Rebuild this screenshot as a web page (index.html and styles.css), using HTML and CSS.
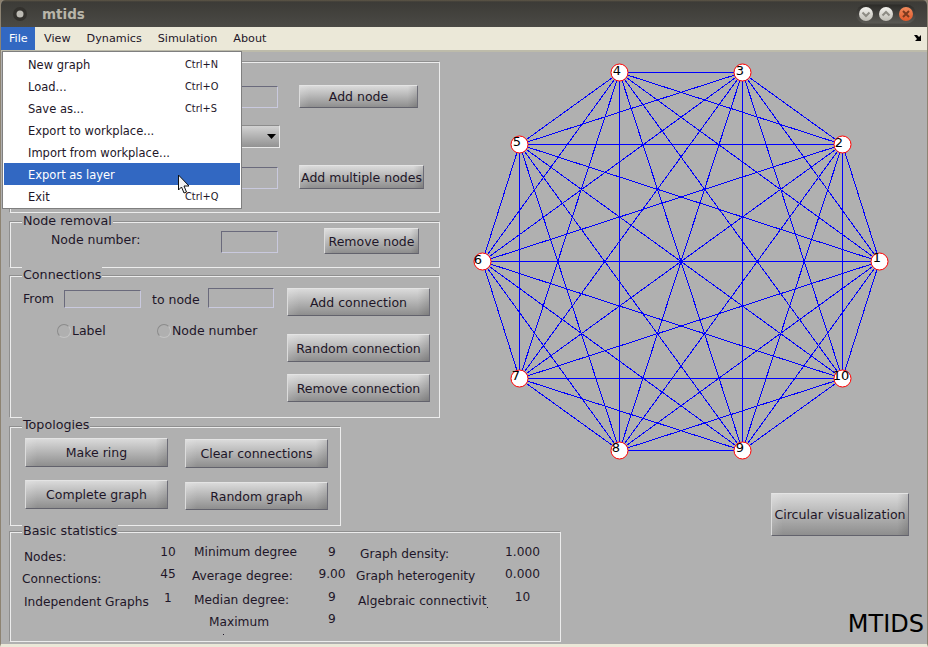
FILE: index.html
```html
<!DOCTYPE html>
<html lang="en">
<head>
<meta charset="utf-8">
<title>mtids</title>
<link rel="stylesheet" href="styles.css">
</head>
<body>
<div class="window">
  <header class="titlebar">
    <svg class="app-icon" width="16" height="16" viewBox="0 0 16 16"><circle cx="8" cy="8" r="7" fill="#33312d"/><circle cx="8" cy="8" r="3.500" fill="#bdbbb4"/></svg>
    <span class="title">mtids</span>
    <svg class="win-btns" width="62" height="20" viewBox="0 0 62 20">
      <defs>
        <linearGradient id="lg" x1="0" y1="0" x2="0" y2="1"><stop offset="0" stop-color="#f4f3ef"/><stop offset="1" stop-color="#bdbbb3"/></linearGradient>
        <linearGradient id="og" x1="0" y1="0" x2="0" y2="1"><stop offset="0" stop-color="#f08a5c"/><stop offset="1" stop-color="#e0592a"/></linearGradient>
        <linearGradient id="pg" x1="0" y1="0" x2="0" y2="1"><stop offset="0" stop-color="#2c2b28"/><stop offset="1" stop-color="#5b5a55"/></linearGradient>
      </defs>
      <rect x="0" y="0.5" width="60" height="19" rx="9.5" fill="url(#pg)"/>
      <circle cx="10" cy="10" r="7" fill="url(#lg)"/>
      <path d="M6.5 8.5L10 12L13.500 8.500" fill="none" stroke="#8d8b84" stroke-width="2"/>
      <circle cx="30" cy="10" r="7" fill="url(#lg)"/>
      <path d="M26.500 11.500L30 8L33.500 11.500" fill="none" stroke="#8d8b84" stroke-width="2"/>
      <circle cx="50" cy="10" r="7" fill="url(#og)"/>
      <path d="M47 7L53 13M53 7L47 13" fill="none" stroke="#7c3a1e" stroke-width="2"/>
    </svg>
  </header>
  <nav class="menubar">
    <span class="menu-item active">File</span>
    <span class="menu-item">View</span>
    <span class="menu-item">Dynamics</span>
    <span class="menu-item">Simulation</span>
    <span class="menu-item">About</span>
    <svg class="dock" width="10" height="9" viewBox="0 0 10 9"><path d="M1 1L4 1L6 3L8 1L8 7L2 7L4 5Z" fill="#000"/></svg>
  </nav>

  <main class="content">
    <div class="left">
      <section class="panel p-nodes">
        <div class="node-grid">
          <span class="field f-add"></span>
          <button class="btn b-add">Add node</button>
          <span class="dropdown"><svg width="9" height="5" viewBox="0 0 9 5"><path d="M0 0H9L4.500 5Z" fill="#000"/></svg></span>
          <span></span>
          <span class="field f-multi"></span>
          <button class="btn b-multi">Add multiple nodes</button>
        </div>
      </section>

      <section class="panel p-removal">
        <span class="legend">Node removal</span>
        <span class="removal-label">Node number:</span>
        <span class="field f-remove"></span>
        <button class="btn b-remove">Remove node</button>
      </section>

      <section class="panel p-conn">
        <span class="legend">Connections</span>
        <div class="conn-left">
          <div class="conn-row">
            <span class="from-label">From</span>
            <span class="field f-from"></span>
            <span class="to-label">to node</span>
            <span class="field f-to"></span>
          </div>
          <div class="radio-row">
            <span class="radio"></span><span class="radio-text r-label">Label</span>
            <span class="radio"></span><span class="radio-text">Node number</span>
          </div>
        </div>
        <div class="conn-right">
          <button class="btn b-conn">Add connection</button>
          <button class="btn b-conn b-conn2">Random connection</button>
          <button class="btn b-conn b-conn3">Remove connection</button>
        </div>
      </section>

      <section class="panel p-topo">
        <span class="legend legend-topo">Topologies</span>
        <div class="topo-col">
          <button class="btn b-topo">Make ring</button>
          <button class="btn b-topo">Complete graph</button>
        </div>
        <div class="topo-col topo-col2">
          <button class="btn b-topo">Clear connections</button>
          <button class="btn b-topo b-short">Random graph</button>
        </div>
      </section>

      <section class="panel p-stats">
        <span class="legend">Basic statistics</span>
        <div class="stats">
          <span class="s n5 i13">Nodes:</span><span class="v">10</span>
          <span class="s i8">Minimum degree</span><span class="v">9</span>
          <span class="s n2 i6">Graph density:</span><span class="v">1.000</span>

          <span class="s n4 i11">Connections:</span><span class="v m1">45</span>
          <span class="s n1 i6">Average degree:</span><span class="v m1">9.00</span>
          <span class="s n1 i2">Graph heterogenity</span><span class="v m1">0.000</span>

          <span class="s n4 i13">Independent Graphs</span><span class="v">1</span>
          <span class="s n2 i8">Median degree:</span><span class="v m1">9</span>
          <span class="s n3 i4">Algebraic connectivit<i class="tick"></i></span><span class="v m1">10</span>

          <span></span><span></span>
          <span class="s n1 i8 maxi">Maximum<i class="tick-low"></i></span><span class="v m2">9</span>
        </div>
      </section>
    </div>

    <div class="right">
      <svg class="graph" width="488" height="440" viewBox="440 52 488 440">
        <path class="edges" d="M879.500 261.500L842.500 144.500M879.500 261.500L742.500 72.500M879.500 261.500L619.500 72.500M879.500 261.500L519.500 144.500M879.500 261.500L482.500 261.500M879.500 261.500L519.500 378.500M879.500 261.500L619.500 450.500M879.500 261.500L742.500 450.500M879.500 261.500L842.500 378.500
        M842.500 144.500L742.500 72.500M842.500 144.500L619.500 72.500M842.500 144.500L519.500 144.500M842.500 144.500L482.500 261.500M842.500 144.500L519.500 378.500M842.500 144.500L619.500 450.500M842.500 144.500L742.500 450.500M842.500 144.500L842.500 378.500
        M742.500 72.500L619.500 72.500M742.500 72.500L519.500 144.500M742.500 72.500L482.500 261.500M742.500 72.500L519.500 378.500M742.500 72.500L619.500 450.500M742.500 72.500L742.500 450.500M742.500 72.500L842.500 378.500
        M619.500 72.500L519.500 144.500M619.500 72.500L482.500 261.500M619.500 72.500L519.500 378.500M619.500 72.500L619.500 450.500M619.500 72.500L742.500 450.500M619.500 72.500L842.500 378.500
        M519.500 144.500L482.500 261.500M519.500 144.500L519.500 378.500M519.500 144.500L619.500 450.500M519.500 144.500L742.500 450.500M519.500 144.500L842.500 378.500
        M482.500 261.500L519.500 378.500M482.500 261.500L619.500 450.500M482.500 261.500L742.500 450.500M482.500 261.500L842.500 378.500
        M519.500 378.500L619.500 450.500M519.500 378.500L742.500 450.500M519.500 378.500L842.500 378.500
        M619.500 450.500L742.500 450.500M619.500 450.500L842.500 378.500
        M742.500 450.500L842.500 378.500"/>
        <g class="nodes">
          <circle cx="879.500" cy="261.500" r="8.500"/><text x="877" y="262">1</text>
          <circle cx="842.500" cy="144.500" r="8.500"/><text x="839" y="147">2</text>
          <circle cx="742.500" cy="72.500" r="8.500"/><text x="740" y="75">3</text>
          <circle cx="619.500" cy="72.500" r="8.500"/><text x="617" y="75">4</text>
          <circle cx="519.500" cy="144.500" r="8.500"/><text x="517" y="146">5</text>
          <circle cx="482.500" cy="261.500" r="8.500"/><text x="478" y="264">6</text>
          <circle cx="519.500" cy="378.500" r="8.500"/><text x="516" y="380">7</text>
          <circle cx="619.500" cy="450.500" r="8.500"/><text x="616" y="452">8</text>
          <circle cx="742.500" cy="450.500" r="8.500"/><text x="740" y="452">9</text>
          <circle cx="842.500" cy="378.500" r="8.500"/><text x="841" y="380">10</text>
        </g>
      </svg>
      <button class="btn b-circ">Circular visualization</button>
      <div class="brand">MTIDS</div>
    </div>
  </main>

  <div class="file-menu">
    <div class="mi"><span>New graph</span><span class="sc">Ctrl+N</span></div>
    <div class="mi"><span>Load...</span><span class="sc">Ctrl+O</span></div>
    <div class="mi"><span>Save as...</span><span class="sc">Ctrl+S</span></div>
    <div class="mi"><span>Export to workplace...</span></div>
    <div class="mi"><span>Import from workplace...</span></div>
    <div class="mi sel"><span>Export as layer</span></div>
    <div class="mi"><span>Exit</span><span class="sc">Ctrl+Q</span></div>
  </div>
  <svg class="cursor" width="14" height="21" viewBox="0 0 14 21"><path d="M1.500 1V16L4.500 13L7 19L9.500 18L7 12H12Z" fill="#f2f2f2" stroke="#111" stroke-width="1"/></svg>
</div>
</body>
</html>
```

FILE: styles.css
```css
* { box-sizing: border-box; }
html, body { margin: 0; padding: 0; }
body { width: 928px; height: 647px; overflow: hidden; background: #8a7f6e; font-family: "DejaVu Sans", sans-serif; color: #1e1628; }

.window { position: relative; width: 928px; height: 647px; display: flex; flex-direction: column; background: #b0b0b0; border-left: 1px solid #8d8372; border-right: 1px solid #8d8372; border-bottom: 3px solid #ebe8d8; border-radius: 5px 5px 0 0; overflow: hidden; }

.titlebar { flex: 0 0 27px; display: flex; align-items: center; background: linear-gradient(#5f5848 0, #3c3b37 2px, #4b4a45 100%); padding-left: 11px; }
.app-icon { flex: none; }
.title { margin-left: 14px; font-size: 13.5px; font-weight: bold; color: #b8b5a9; }
.win-btns { margin-left: auto; margin-right: 9px; }

.menubar { flex: 0 0 25px; display: flex; align-items: center; background: #ebe8d8; border-bottom: 2px solid #bdbbaa; font-size: 11.2px; }
.menu-item { height: 23px; line-height: 24px; padding: 0 8px; }
.menu-item.active { background: #3268c2; color: #fff; width: 34px; padding-left: 8px; margin-right: 1px; }
.dock { margin-left: auto; margin-right: 4px; }

.content { flex: 1; display: flex; min-height: 0; }
.left { flex: 0 0 439px; min-width: 0; padding: 10px 0 0 9px; }
.right { flex: 1; display: flex; flex-direction: column; min-width: 0; }

.panel { position: relative; border: 1px solid #ececec; box-shadow: -1px -1px 0 #8f8f8f; font-size: 12.5px; width: 430px; }
.legend { position: absolute; left: 11px; top: -10px; background: #b0b0b0; padding: 0 1px; line-height: 16px; font-size: 12.7px; }
.legend-topo { top: -11px; }

.field { display: block; width: 57px; border: 1px solid; border-color: #6a6a7c #c9c9de #c9c9de #6a6a7c; }
.btn { display: block; padding: 0; font: inherit; color: inherit; white-space: nowrap; border: 1px solid; border-color: #e4e4e4 #6c6c76 #62626c #dcdcdc; background: linear-gradient(90deg, rgba(255,255,255,.14), rgba(255,255,255,0) 8%, rgba(0,0,0,0) 92%, rgba(0,0,0,.12)), linear-gradient(#dadada, #8e8e8e); }

.p-nodes { height: 151px; }
.node-grid { display: grid; grid-template-columns: 57px 125px; column-gap: 21px; row-gap: 17px; padding: 22px 0 0 210px; }
.f-add { height: 22px; margin-top: 1px; }
.b-add { width: 119px; height: 23px; }
.dropdown { justify-self: end; width: 150px; height: 23px; margin-right: -2px; display: flex; align-items: center; justify-content: flex-end; padding-right: 3px; border: 1px solid #e8e8e8; border-top-color: #8c8c8c; border-left-color: #8c8c8c; background: linear-gradient(#d2d2d2, #929292); }
.f-multi { height: 22px; margin-top: 2px; }
.b-multi { width: 125px; height: 24px; }

.p-removal { height: 46px; margin-top: 9px; display: flex; align-items: flex-start; padding: 5px 0 0 40px; }
.removal-label { width: 170px; margin-top: 4px; }
.f-remove { height: 22px; margin-top: 3px; }
.b-remove { width: 95px; height: 26px; margin-left: 46px; }

.p-conn { height: 142px; margin-top: 8px; display: flex; padding: 11px 0 0 12px; }
.conn-left { width: 264px; }
.conn-row { display: flex; align-items: flex-start; }
.from-label { width: 41px; margin-top: 3px; }
.f-from { width: 77px; height: 18px; margin-top: 2px; }
.to-label { margin: 4px 0 0 11px; width: 56px; }
.f-to { width: 66px; height: 20px; }
.radio-row { display: flex; align-items: center; margin: 15px 0 0 34px; }
.radio { width: 14px; height: 14px; border-radius: 50%; border: 1px solid #8b8b8b; border-bottom-color: #c4c4c4; border-right-color: #c4c4c4; flex: none; }
.radio-text { margin-left: 1px; }
.r-label { width: 85px; }
.conn-right { display: flex; flex-direction: column; }
.b-conn { width: 143px; height: 28px; }
.b-conn2 { margin-top: 18px; }
.b-conn3 { margin-top: 12px; }

.p-topo { width: 331px; height: 99px; margin-top: 9px; display: flex; gap: 17px; padding: 10px 0 0 14px; }
.topo-col { display: flex; flex-direction: column; gap: 13px; }
.topo-col2 { margin-top: 1px; }
.b-topo { width: 143px; height: 29px; }
.b-short { margin-top: 1px; height: 28px; }

.p-stats { width: 551px; height: 110px; margin-top: 6px; }
.stats { display: grid; grid-template-columns: 139px 36px 124px 44px 146px 45px; grid-auto-rows: 23px; padding-top: 8px; font-size: 12.2px; }
.s, .v { line-height: 23px; white-space: nowrap; align-self: start; }
.v { text-align: center; }
.n1 { margin-top: 1px; }
.n2 { margin-top: 2px; }
.n3 { margin-top: 3px; }
.n4 { margin-top: 4px; }
.n5 { margin-top: 5px; }
.m1 { margin-top: -1px; }
.m2 { margin-top: -2px; }
.i2 { margin-left: 2px; }
.i4 { margin-left: 4px; }
.i6 { margin-left: 6px; }
.i8 { margin-left: 8px; }
.i11 { margin-left: 11px; }
.i13 { margin-left: 13px; }
.maxi { width: 90px; text-align: center; }
.tick-low { display: block; width: 1px; height: 1px; margin-left: 29px; background: #1e1628; }
.tick { display: inline-block; width: 1px; height: 1px; background: #1e1628; vertical-align: -3px; margin-left: 1px; }

.graph { display: block; flex: none; }
.edges { fill: none; stroke: #0000ff; stroke-width: 1; shape-rendering: crispEdges; }
.nodes circle { fill: #fff; stroke: #ff0000; stroke-width: 1; }
.nodes text { font-size: 13px; fill: #000; text-anchor: middle; }
.b-circ { width: 138px; height: 43px; margin: 1px 0 0 331px; font-size: 12.6px; }
.brand { margin: auto 3px 6px 0; text-align: right; font-size: 24px; color: #000; line-height: 28px; }

.file-menu { position: absolute; left: 1px; top: 51px; width: 240px; height: 158px; background: #fff; border: 1px solid #7f7f7f; padding: 1px; font-size: 11.5px; color: #1e1628; }
.mi { height: 22px; line-height: 24px; padding-left: 24px; position: relative; display: flex; }
.mi.sel { background: #3268c2; color: #fff; }
.sc { position: absolute; left: 181px; font-size: 9.8px; }
.cursor { position: absolute; left: 176px; top: 174px; }
```
